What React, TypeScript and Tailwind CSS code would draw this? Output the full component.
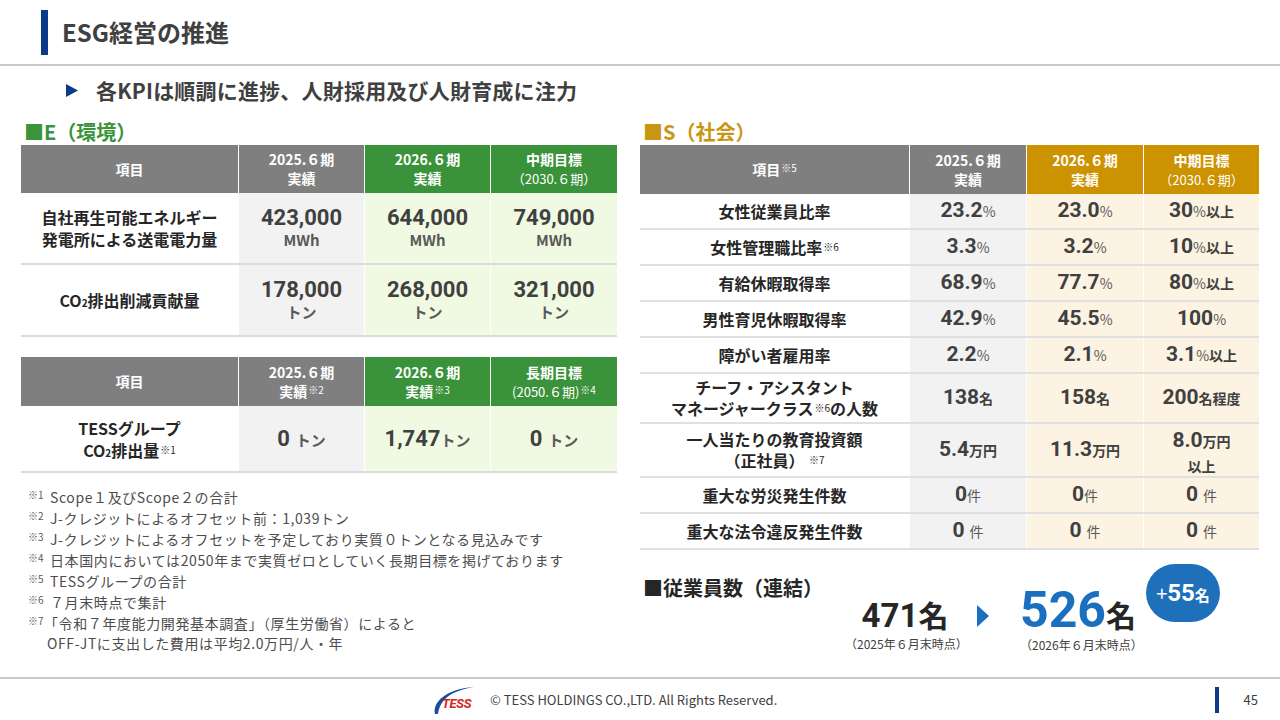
import type { ReactNode } from 'react';

const NUM = "font-['Roboto','Noto_Sans_CJK_JP',sans-serif]";

function Sup({ children }: { children: ReactNode }) {
  return <sup className="text-[10px] leading-none font-normal -top-[3px] ml-px">{children}</sup>;
}

function HeadCell({ bg, children }: { bg: string; children: ReactNode }) {
  return <div className={`${bg} flex flex-col items-center justify-center`}>{children}</div>;
}

function EVal({ bg, n, u }: { bg: string; n: string; u: string }) {
  return (
    <div className={`${bg} flex flex-col items-center justify-center`}>
      <span className={`${NUM} text-[22px] font-bold leading-[24px] text-[#404040]`}>{n}</span>
      <span className="text-[15px] font-bold leading-[20px] text-[#595959]">{u}</span>
    </div>
  );
}

function EInline({ bg, n, gap }: { bg: string; n: string; gap?: boolean }) {
  return (
    <div className={`${bg} flex items-center justify-center`}>
      <div className="flex items-baseline text-[#404040] font-bold">
        <span className={`${NUM} text-[22px]`}>{n}</span>
        <span className={gap ? 'ml-[6px] text-[15px] text-[#595959]' : 'text-[15px] text-[#595959]'}>トン</span>
      </div>
    </div>
  );
}

// value in the S table: big number + small unit(s)
function V({ n, u, tail, thin, gap }: { n: string; u: string; tail?: string; thin?: boolean; gap?: boolean }) {
  const unit = thin ? 'text-[14px] font-normal text-[#595959]' : 'text-[14px] font-bold text-[#404040]';
  return (
    <div className="flex items-baseline text-[#404040]">
      <span className={`${NUM} text-[21px] font-bold`}>{n}</span>
      <span className={gap ? `ml-[5px] ${unit}` : unit}>{u}</span>
      {tail && <span className="text-[14px] font-bold text-[#404040]">{tail}</span>}
    </div>
  );
}

function SRow({ h, label, c2, c3, c4 }: { h: string; label: ReactNode; c2: ReactNode; c3: ReactNode; c4: ReactNode }) {
  return (
    <div className={`grid grid-cols-[269px_116px_116px_115px] gap-x-px ${h} border-b-2 border-[#e0e0e0]`}>
      <div className="bg-white flex flex-col items-center justify-center text-[16px] font-bold leading-[21px] text-[#262626]">
        {label}
      </div>
      <div className="bg-[#f2f2f2] flex items-center justify-center">{c2}</div>
      <div className="bg-[#fcf3e2] flex items-center justify-center">{c3}</div>
      <div className="bg-[#fcf3e2] flex flex-col items-center justify-center">{c4}</div>
    </div>
  );
}

function Note({ mark, children }: { mark: string; children: ReactNode }) {
  return (
    <div className="flex items-start leading-[21px]">
      <span className="w-[22px] shrink-0 text-[10px] leading-[15px] tracking-normal text-[#595959]">{mark}</span>
      <div>{children}</div>
    </div>
  );
}

function TessLogo() {
  return (
    <div className="relative w-[44px] h-[30px]">
      <svg className="absolute left-0 top-0" width="44" height="30" viewBox="0 0 44 30">
        <path d="M3 29 C0 18 13 4 42 2 C18 6 8 15 6 29 Z" fill="#1b4c9c" />
      </svg>
      <span className="absolute left-[10px] top-[11px] text-[13px] leading-[15px] font-bold italic tracking-[-0.3px] text-[#d91e24] font-['Roboto',sans-serif]">
        TESS
      </span>
    </div>
  );
}

export default function App() {
  return (
    <div className="w-[1280px] h-[720px] bg-white flex flex-col overflow-hidden font-['Noto_Sans_CJK_JP',sans-serif] text-[#404040]">
      <header className="h-[66px] shrink-0 flex items-center pl-[41px] border-b-2 border-[#c8c8c8]">
        <div className="w-[7px] h-[45px] bg-[#0b3a8c]" />
        <h1 className="ml-[14px] text-[24px] font-bold leading-none text-[#404040]">ESG経営の推進</h1>
      </header>

      <main className="flex-1 flex flex-col">
        <div className="mt-[11px] h-[26px] flex items-center pl-[66px]">
          <svg width="12" height="13" viewBox="0 0 12 13">
            <path d="M0 0 L12 6.5 L0 13 Z" fill="#0b3a8c" />
          </svg>
          <p className="ml-[18px] text-[21px] font-bold leading-none tracking-[0.2px] text-[#404040]">各KPIは順調に進捗、人財採用及び人財育成に注力</p>
        </div>

        <div className="mt-[15px] flex pl-[21px] gap-[23px]">
          {/* E */}
          <section className="w-[596px] flex flex-col">
            <div className="h-[27px] flex items-center pl-[3px] text-[20px] font-bold text-[#3a943a]">■E（環境）</div>

            <div className="grid grid-cols-[217px_125px_125px_126px] gap-x-px h-[48px] text-white font-bold text-[14px] leading-[19px]">
              <HeadCell bg="bg-[#7f7f7f]">項目</HeadCell>
              <HeadCell bg="bg-[#7f7f7f]">
                <span>2025.６期</span>
                <span>実績</span>
              </HeadCell>
              <HeadCell bg="bg-[#3a923a]">
                <span>2026.６期</span>
                <span>実績</span>
              </HeadCell>
              <HeadCell bg="bg-[#3a923a]">
                <span>中期目標</span>
                <span className="font-normal text-[13px]">（2030.６期）</span>
              </HeadCell>
            </div>
            <div className="grid grid-cols-[217px_125px_125px_126px] gap-x-px h-[72px] border-b-2 border-[#dcdcdc]">
              <div className="bg-white flex flex-col items-center justify-center text-[16px] font-bold leading-[22px] text-[#262626]">
                <span>自社再生可能エネルギー</span>
                <span>発電所による送電電力量</span>
              </div>
              <EVal bg="bg-[#f2f2f2]" n="423,000" u="MWh" />
              <EVal bg="bg-[#f0fae2]" n="644,000" u="MWh" />
              <EVal bg="bg-[#f0fae2]" n="749,000" u="MWh" />
            </div>
            <div className="grid grid-cols-[217px_125px_125px_126px] gap-x-px h-[72px] border-b-2 border-[#dcdcdc]">
              <div className="bg-white flex items-center justify-center text-[16px] font-bold text-[#262626]">
                <span>
                  CO<sub className="text-[10px] bottom-0">2</sub>排出削減貢献量
                </span>
              </div>
              <EVal bg="bg-[#f2f2f2]" n="178,000" u="トン" />
              <EVal bg="bg-[#f0fae2]" n="268,000" u="トン" />
              <EVal bg="bg-[#f0fae2]" n="321,000" u="トン" />
            </div>

            <div className="mt-[20px] grid grid-cols-[217px_125px_125px_126px] gap-x-px h-[49px] text-white font-bold text-[14px] leading-[19px]">
              <HeadCell bg="bg-[#7f7f7f]">項目</HeadCell>
              <HeadCell bg="bg-[#7f7f7f]">
                <span>2025.６期</span>
                <span>
                  実績<Sup>※2</Sup>
                </span>
              </HeadCell>
              <HeadCell bg="bg-[#3a923a]">
                <span>2026.６期</span>
                <span>
                  実績<Sup>※3</Sup>
                </span>
              </HeadCell>
              <HeadCell bg="bg-[#3a923a]">
                <span>長期目標</span>
                <span className="font-normal text-[13px]">
                  (2050.６期)<Sup>※4</Sup>
                </span>
              </HeadCell>
            </div>
            <div className="grid grid-cols-[217px_125px_125px_126px] gap-x-px h-[67px] border-b-2 border-[#dcdcdc]">
              <div className="bg-white flex flex-col items-center justify-center text-[16px] font-bold leading-[22px] text-[#262626]">
                <span>TESSグループ</span>
                <span>
                  CO<sub className="text-[10px] leading-none bottom-0">2</sub>排出量<Sup>※1</Sup>
                </span>
              </div>
              <EInline bg="bg-[#f2f2f2]" n="0" gap />
              <EInline bg="bg-[#f0fae2]" n="1,747" />
              <EInline bg="bg-[#f0fae2]" n="0" gap />
            </div>

            <div className="mt-[14px] pl-[7px] text-[14px] tracking-[0.6px] text-[#4d4d4d]">
              <Note mark="※1">Scope１及びScope２の合計</Note>
              <Note mark="※2">J-クレジットによるオフセット前：1,039トン</Note>
              <Note mark="※3">J-クレジットによるオフセットを予定しており実質０トンとなる見込みです</Note>
              <Note mark="※4">日本国内においては2050年まで実質ゼロとしていく長期目標を掲げております</Note>
              <Note mark="※5">TESSグループの合計</Note>
              <Note mark="※6">７月末時点で集計</Note>
              <Note mark="※7">
                <div className="-ml-[6px]">「令和７年度能力開発基本調査」（厚生労働省）によると</div>
                <div className="-ml-[3px] leading-[19px]">OFF-JTに支出した費用は平均2.0万円/人・年</div>
              </Note>
            </div>
          </section>

          {/* S */}
          <section className="w-[619px] flex flex-col">
            <div className="h-[27px] flex items-center pl-[3px] text-[20px] font-bold text-[#c89612]">■S（社会）</div>

            <div className="grid grid-cols-[269px_116px_116px_115px] gap-x-px h-[49px] text-white font-bold text-[14px] leading-[19px]">
              <HeadCell bg="bg-[#7f7f7f]">
                <span>
                  項目<Sup>※5</Sup>
                </span>
              </HeadCell>
              <HeadCell bg="bg-[#7f7f7f]">
                <span>2025.６期</span>
                <span>実績</span>
              </HeadCell>
              <HeadCell bg="bg-[#cc9200]">
                <span>2026.６期</span>
                <span>実績</span>
              </HeadCell>
              <HeadCell bg="bg-[#cc9200]">
                <span>中期目標</span>
                <span className="font-normal text-[13px]">（2030.６期）</span>
              </HeadCell>
            </div>

            <SRow h="h-[36px]" label="女性従業員比率" c2={<V n="23.2" u="%" thin />} c3={<V n="23.0" u="%" thin />} c4={<V n="30" u="%" tail="以上" thin />} />
            <SRow
              h="h-[36px]"
              label={
                <span>
                  女性管理職比率<Sup>※6</Sup>
                </span>
              }
              c2={<V n="3.3" u="%" thin />}
              c3={<V n="3.2" u="%" thin />}
              c4={<V n="10" u="%" tail="以上" thin />}
            />
            <SRow h="h-[36px]" label="有給休暇取得率" c2={<V n="68.9" u="%" thin />} c3={<V n="77.7" u="%" thin />} c4={<V n="80" u="%" tail="以上" thin />} />
            <SRow h="h-[36px]" label="男性育児休暇取得率" c2={<V n="42.9" u="%" thin />} c3={<V n="45.5" u="%" thin />} c4={<V n="100" u="%" thin />} />
            <SRow h="h-[36px]" label="障がい者雇用率" c2={<V n="2.2" u="%" thin />} c3={<V n="2.1" u="%" thin />} c4={<V n="3.1" u="%" tail="以上" thin />} />
            <SRow
              h="h-[50px]"
              label={
                <>
                  <span>チーフ・アシスタント</span>
                  <span>
                    マネージャークラス<Sup>※6</Sup>の人数
                  </span>
                </>
              }
              c2={<V n="138" u="名" />}
              c3={<V n="158" u="名" />}
              c4={<V n="200" u="名程度" />}
            />
            <SRow
              h="h-[54px]"
              label={
                <>
                  <span>一人当たりの教育投資額</span>
                  <span>
                    （正社員） <Sup>※7</Sup>
                  </span>
                </>
              }
              c2={<V n="5.4" u="万円" />}
              c3={<V n="11.3" u="万円" />}
              c4={
                <>
                  <V n="8.0" u="万円" />
                  <span className="text-[14px] font-bold leading-[18px] text-[#404040]">以上</span>
                </>
              }
            />
            <SRow h="h-[36px]" label="重大な労災発生件数" c2={<V n="0" u="件" thin />} c3={<V n="0" u="件" thin />} c4={<V n="0" u="件" thin gap />} />
            <SRow h="h-[36px]" label="重大な法令違反発生件数" c2={<V n="0" u="件" thin gap />} c3={<V n="0" u="件" thin gap />} c4={<V n="0" u="件" thin gap />} />

            <div className="relative mt-[12px] flex items-baseline pl-[3px]">
              <div className="self-start mt-[13px] w-[202px] text-[20px] font-bold leading-[26px] text-[#262626]">■従業員数（連結）</div>
              <div className="w-[120px] flex flex-col items-center">
                <div className="flex items-baseline leading-none font-bold text-[#262626]">
                  <span className={`${NUM} text-[33px]`}>471</span>
                  <span className="text-[30px]">名</span>
                </div>
                <div className="mt-[4px] text-[12px] leading-[16px] text-[#404040]">（2025年６月末時点）</div>
              </div>
              <svg className="ml-[12px]" width="12" height="22" viewBox="0 0 12 22">
                <path d="M0 0 L12 11 L0 22 Z" fill="#1b6fbf" />
              </svg>
              <div className="ml-[31px] pt-[26px] flex flex-col items-start">
                <div className="flex items-baseline leading-[44px] h-[44px] font-bold">
                  <span className={`${NUM} text-[50px] text-[#1b6fbf]`}>526</span>
                  <span className="text-[30px] text-[#262626]">名</span>
                </div>
                <div className="mt-[5px] text-[12px] leading-[16px] text-[#404040]">（2026年６月末時点）</div>
              </div>
              <div className="absolute left-[506px] top-[2px] w-[74px] h-[58px] rounded-full bg-[#1f70bb] flex items-center justify-center text-white">
                <div className="flex items-baseline leading-none">
                  <span className="text-[20px] font-normal">+</span>
                  <span className={`${NUM} text-[24px] font-bold`}>55</span>
                  <span className="text-[15px] font-bold">名</span>
                </div>
              </div>
            </div>
          </section>
        </div>
      </main>

      <footer className="h-[43px] shrink-0 border-t-2 border-[#c8c8c8] flex items-center pl-[432px] pr-[22px]">
        <TessLogo />
        <span className="ml-[14px] text-[13px] text-[#404040]">© TESS HOLDINGS CO.,LTD. All Rights Reserved.</span>
        <div className="ml-auto w-[4px] h-[26px] bg-[#0b3a8c]" />
        <span className="ml-[25px] text-[13px] text-[#404040]">45</span>
      </footer>
    </div>
  );
}
